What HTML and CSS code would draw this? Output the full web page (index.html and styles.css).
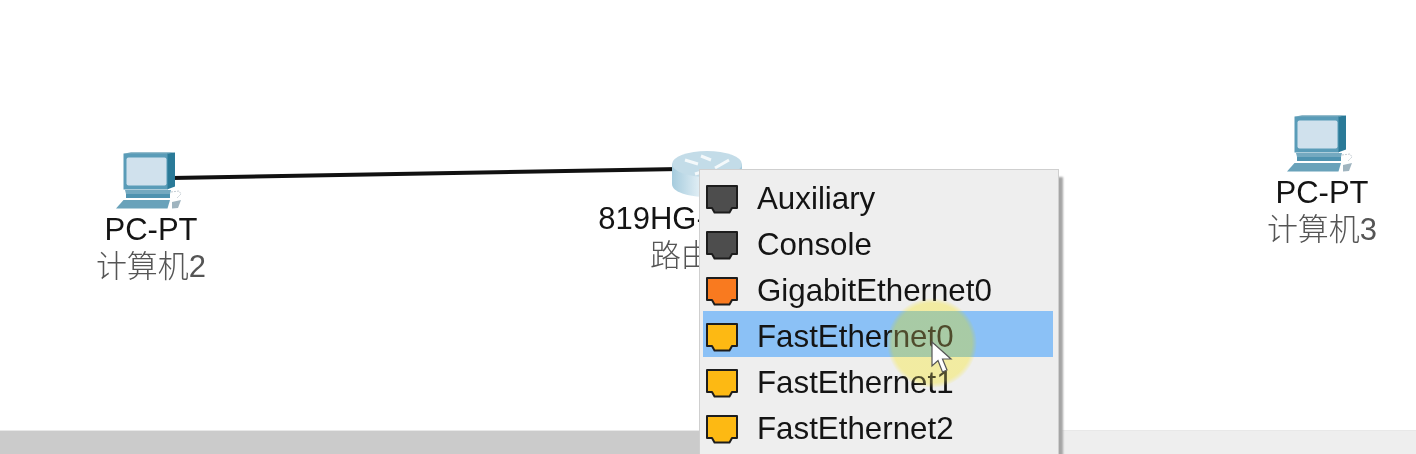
FILE: index.html
```html
<!doctype html>
<html lang="zh">
  <head>
    <meta charset="UTF-8" />
    <title>Packet Tracer</title>
    <link rel="stylesheet" href="styles.css">
  </head>
  <body>
    <svg width="0" height="0" class="defs">
      <defs>
        <linearGradient id="routerSide" x1="0" x2="1" y1="0" y2="0">
          <stop offset="0" stop-color="#a5cbdd" />
          <stop offset="0.45" stop-color="#e9f3f8" />
          <stop offset="1" stop-color="#a5cbdd" />
        </linearGradient>
        <symbol id="pc" viewBox="0 0 70 62">
          <polygon points="54,3.5 62,2.5 62,36.5 54,39.5" fill="#2a7a98" />
          <rect x="10.5" y="3.5" width="44" height="36" fill="#5a9cb8" />
          <polygon points="10.5,3.5 54,3.5 62,2.5 18,2.5" fill="#2f7d9c" />
          <rect x="13.5" y="7.5" width="40" height="28" rx="2" fill="#d0e1ed" />
          <polygon points="12,40 58,40 57,44 13,44" fill="#74a9c0" />
          <polygon points="13,44 57,44 57,48 13,48" fill="#4f93b0" />
          <polygon points="10.5,50 57,50 54.5,58.5 3,58.5" fill="#69a2ba" />
          <polygon points="59,52 68,50 65,58 59,58.5" fill="#9fb4bf" />
          <path d="M58 42 L66 41 L68 44 L64 48" fill="none" stroke="#c4ccd2" stroke-width="1" stroke-dasharray="2 1" />
        </symbol>
        <symbol id="port" viewBox="0 0 34 30">
          <path d="M2 2H32V24H27L24.5 28.5H9.5L7 24H2Z" stroke="#1d1d1d" stroke-width="2" stroke-linejoin="round" />
        </symbol>
      </defs>
    </svg>

    <main class="canvas">
      <svg class="link" width="1416" height="430">
        <line x1="172" y1="178" x2="680" y2="169" stroke="#111" stroke-width="4" />
      </svg>

      <div class="node node-pc2">
        <svg class="pc-icon"><use href="#pc" /></svg>
        <div class="model">PC-PT</div>
        <div class="name">计算机2</div>
      </div>

      <div class="node node-router">
        <svg class="router-icon" viewBox="0 0 72 46">
          <path d="M1 13V33C1 41 17 46 36 46S71 41 71 33V13Z" fill="url(#routerSide)" />
          <ellipse cx="36" cy="13" rx="35" ry="13" fill="#c3dce8" />
          <path d="M14 9L27 13M44 17L58 9M30 5L40 9M34 20L24 23" stroke="#f4f9fb" stroke-width="3" fill="none" />
        </svg>
        <div class="model">819HG-4G-IOX</div>
        <div class="name">路由器0</div>
      </div>

      <div class="node node-pc3">
        <svg class="pc-icon"><use href="#pc" /></svg>
        <div class="model">PC-PT</div>
        <div class="name">计算机3</div>
      </div>
    </main>

    <footer class="bottom-bar">
      <div class="bar-dark"></div>
      <div class="bar-light"></div>
    </footer>

    <div class="port-menu">
      <div class="port-row"><svg class="port port-gray"><use href="#port" /></svg>Auxiliary</div>
      <div class="port-row"><svg class="port port-gray"><use href="#port" /></svg>Console</div>
      <div class="port-row"><svg class="port port-orange"><use href="#port" /></svg>GigabitEthernet0</div>
      <div class="port-row active"><svg class="port port-yellow"><use href="#port" /></svg>FastEthernet0</div>
      <div class="port-row"><svg class="port port-yellow"><use href="#port" /></svg>FastEthernet1</div>
      <div class="port-row"><svg class="port port-yellow"><use href="#port" /></svg>FastEthernet2</div>
    </div>

    <div class="cursor-glow"></div>
    <div class="cursor-haze"></div>
    <svg class="cursor" width="22" height="34" viewBox="0 0 22 34">
      <path d="M1 1V25L7 19.5L11.5 31L16 29L11.5 18H20Z" fill="#fff" stroke="#555" stroke-width="1.2" />
    </svg>
  </body>
</html>
```

FILE: styles.css
```css
html,
body {
  margin: 0;
  height: 454px;
  overflow: hidden;
  background: white;
}
body {
  font-family: "Liberation Sans", "Noto Sans CJK SC", sans-serif;
  font-size: 31px;
  color: #141414;
}
.defs {
  position: absolute;
}
.canvas {
  position: relative;
  height: 430px;
}
.link {
  position: absolute;
  left: 0;
  top: 0;
}
.node {
  position: absolute;
  width: 260px;
  display: flex;
  flex-direction: column;
  align-items: center;
  line-height: 36px;
}
.node-pc2 {
  left: 21px;
  top: 150px;
}
.node-pc3 {
  left: 1192px;
  top: 113px;
}
.node-router {
  left: 575px;
  top: 151px;
}
.pc-icon {
  width: 70px;
  height: 62px;
  margin-right: 6px;
  filter: blur(0.4px);
}
.router-icon {
  width: 72px;
  height: 46px;
  margin-left: 4px;
  margin-bottom: 4px;
  filter: blur(0.5px);
}
.name {
  color: #555;
  font-weight: 300;
  padding-top: 1px;
}
.bottom-bar {
  display: flex;
  height: 23px;
  border-top: 1px solid #e8e8e8;
}
.bar-dark {
  width: 880px;
  background: #cbcbcb;
}
.bar-light {
  flex: 1;
  background: #eeeeee;
}
.port-menu {
  position: absolute;
  left: 699px;
  top: 169px;
  bottom: 0;
  width: 350px;
  padding: 3px 5px 0 3px;
  background: #eeeeee;
  border: 1px solid #cfcfcf;
  border-bottom: none;
  box-shadow: 4px 8px 2px #a5a5a5;
  font-size: 31.3px;
}
.port-row {
  display: flex;
  align-items: center;
  box-sizing: border-box;
  height: 46px;
  padding: 5px 0 0 2px;
}
.port-row.active {
  background: #8bc1f6;
}
.port {
  width: 34px;
  height: 30px;
  margin-right: 18px;
  filter: blur(0.3px);
}
.port-gray {
  fill: #4d4d4d;
}
.port-orange {
  fill: #f97a1f;
}
.port-yellow {
  fill: #fdb913;
}
.cursor-glow,
.cursor-haze {
  position: absolute;
  left: 887px;
  top: 298px;
  width: 90px;
  height: 90px;
  border-radius: 50%;
}
.cursor-glow {
  background: radial-gradient(closest-side, #fffbb8 88%, #ffffff 100%);
  mix-blend-mode: multiply;
}
.cursor-haze {
  background: radial-gradient(closest-side, rgba(255, 240, 130, 0.25) 88%, rgba(255, 240, 130, 0) 100%);
}
.cursor {
  position: absolute;
  left: 931px;
  top: 341px;
}
```
